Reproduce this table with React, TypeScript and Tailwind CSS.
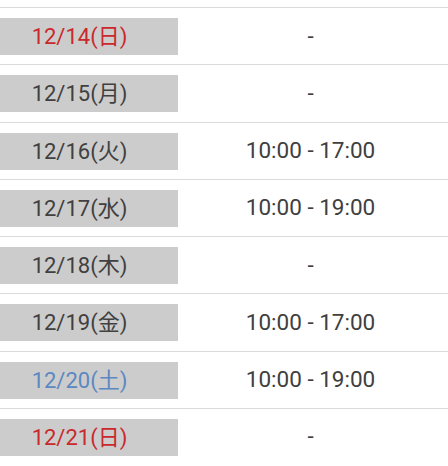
const rows = [
  { date: '12/14(日)', time: '-', color: 'text-[#c9282d]' },
  { date: '12/15(月)', time: '-', color: 'text-[#404040]' },
  { date: '12/16(火)', time: '10:00 - 17:00', color: 'text-[#404040]' },
  { date: '12/17(水)', time: '10:00 - 19:00', color: 'text-[#404040]' },
  { date: '12/18(木)', time: '-', color: 'text-[#404040]' },
  { date: '12/19(金)', time: '10:00 - 17:00', color: 'text-[#404040]' },
  { date: '12/20(土)', time: '10:00 - 19:00', color: 'text-[#5b88c2]' },
  { date: '12/21(日)', time: '-', color: 'text-[#c9282d]' },
];

export default function App() {
  return (
    <div
      className="w-[448px] h-[466px] overflow-hidden bg-white pt-[7px]"
      style={{ fontFamily: 'Roboto, "Noto Sans CJK JP", sans-serif' }}
    >
      {rows.map((row) => (
        <div
          key={row.date}
          className="h-[57.25px] border-t-[1.5px] border-[#dadada] flex items-start pt-[10px]"
        >
          <div
            className={`w-[178px] h-[37px] bg-[#cccccc] flex items-center justify-center pr-[19px] text-[22px] ${row.color}`}
          >
            {row.date}
          </div>
          <div className="flex-1 h-[37px] flex items-center justify-center pr-[5px] text-[22.5px] text-[#404040]">
            {row.time}
          </div>
        </div>
      ))}
    </div>
  );
}
